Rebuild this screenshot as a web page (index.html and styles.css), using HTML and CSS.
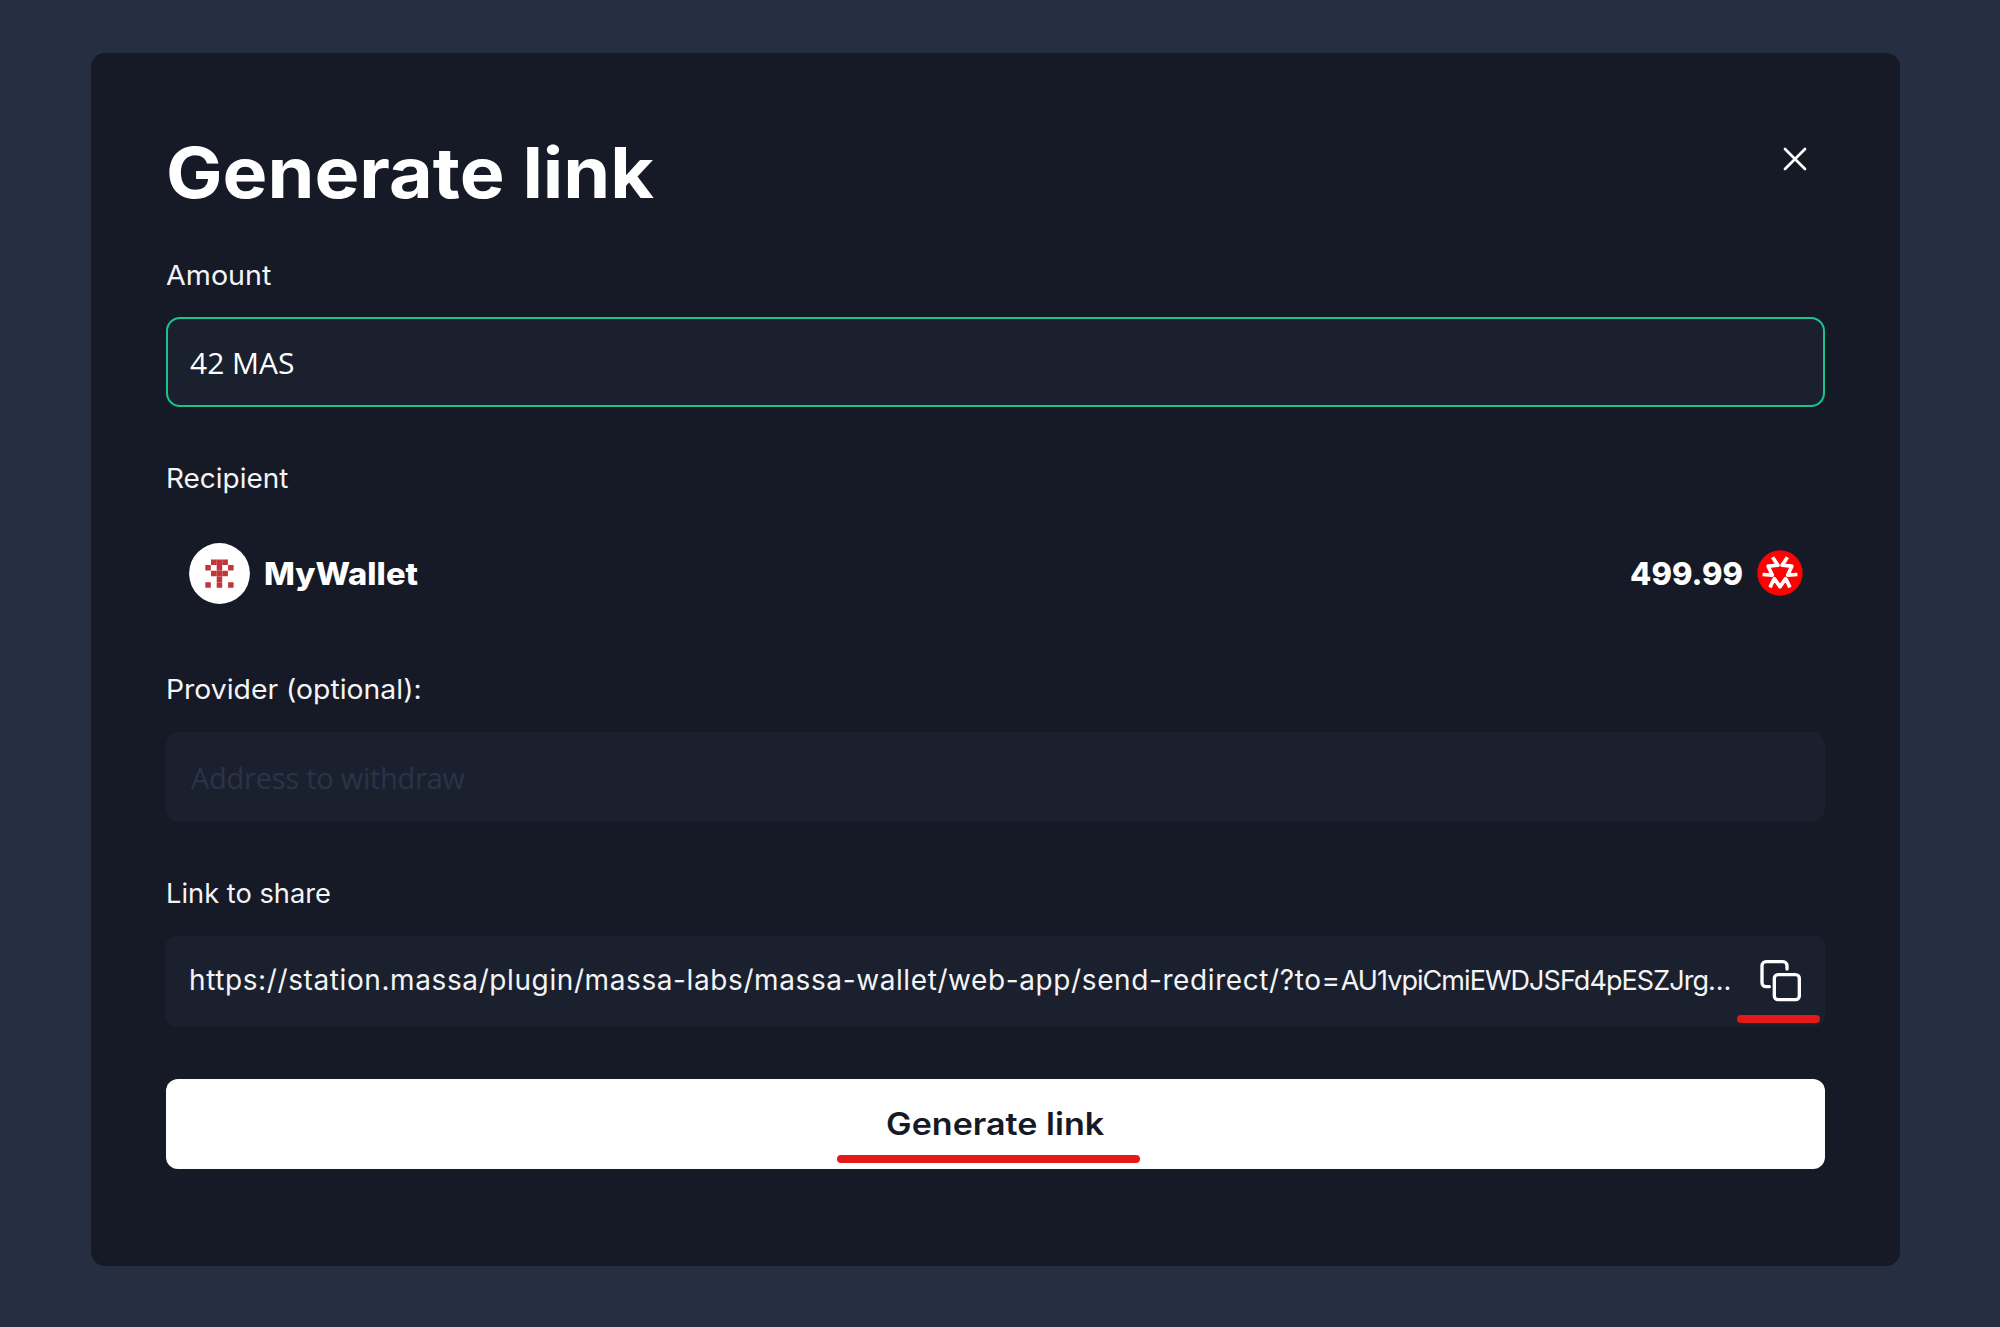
FILE: index.html
```
<!DOCTYPE html>
<html lang="en">
<head>
<meta charset="utf-8">
<title>Generate link</title>
<link rel="stylesheet" href="styles.css">
</head>
<body>
<main class="modal">
  <header class="modal-header">
    <h1 class="title">Generate link</h1>
    <svg class="close" viewBox="0 0 24 24" role="img" aria-label="Close"><path d="M2 2 22 22M22 2 2 22"/></svg>
  </header>
  <section class="field">
    <label class="label label-amount">Amount</label>
    <div class="input input-active"><span class="value">42 MAS</span></div>
  </section>
  <section class="field recipient">
    <label class="label label-recipient">Recipient</label>
    <div class="account">
      <svg class="avatar" viewBox="0 0 61 61"><circle cx="30.5" cy="30.5" r="30.4" fill="#fff"/><path fill="#c1363a" d="M22 16.4h5.5v5.5h-5.5zM27.7 16.4h5.5v5.5h-5.5zM33.4 16.4h5.5v5.5h-5.5zM16.3 22.1h5.5v5.5h-5.5zM27.7 22.1h5.5v5.5h-5.5zM39.1 22.1h5.5v5.5h-5.5zM22 27.8h5.5v5.5h-5.5zM27.7 27.8h5.5v5.5h-5.5zM33.4 27.8h5.5v5.5h-5.5zM27.7 33.5h5.5v5.5h-5.5zM16.3 39.2h5.5v5.5h-5.5zM27.7 39.2h5.5v5.5h-5.5zM39.1 39.2h5.5v5.5h-5.5z"/></svg>
      <span class="name">MyWallet</span>
      <span class="balance">499.99</span>
      <svg class="token" viewBox="-69 -69 138 138"><circle r="68" fill="#fd0303"/><g class="token-mark"><path d="M-30 43-17 17 0 41 17 17 30 43"/><path d="M-30 43-17 17 0 41 17 17 30 43" transform="rotate(120)"/><path d="M-30 43-17 17 0 41 17 17 30 43" transform="rotate(240)"/></g></svg>
    </div>
  </section>
  <section class="field provider">
    <label class="label label-provider">Provider (optional):</label>
    <div class="input"><span class="placeholder">Address to withdraw</span></div>
  </section>
  <section class="field">
    <label class="label label-link">Link to share</label>
    <div class="input share">
      <span class="url">https://station.massa/plugin/massa-labs/massa-wallet/web-app/send-redirect/?to=<span class="address">AU1vpiCmiEWDJSFd4pESZJrg…</span></span>
      <svg class="copy" viewBox="122 90 126 126"><path d="M150 170H140a12 12 0 0 1-12-12V107a12 12 0 0 1 12-12H191a12 12 0 0 1 12 12V117"/><rect x="165" y="134" width="75" height="75" rx="11"/></svg>
      <i class="mark mark-copy"></i>
    </div>
  </section>
  <button class="submit"><span class="submit-text">Generate link</span><i class="mark mark-submit"></i></button>
</main>
</body>
</html>
```
FILE: styles.css
```
* { box-sizing: border-box; }
body {
  margin: 0;
  height: 1327px;
  padding: 53px 100px 61px 91px;
  background: #262f42;
  font-family: Inter, "Noto Sans", sans-serif;
  color: #fff;
  overflow: hidden;
}
.modal {
  height: 1213px;
  padding: 73px 75px 0;
  border-radius: 14px;
  background: #161a26;
}
.modal-header { display: flex; justify-content: space-between; height: 130px; }
.title { margin: 0; font-size: 70px; font-weight: 650; line-height: 94px; letter-spacing: 0; white-space: nowrap; transform: scaleX(1.077); transform-origin: left; }
.close { width: 24px; height: 24px; margin: 21px 18px 0 0; fill: none; stroke: #fff; stroke-width: 2.7; stroke-linecap: round; }
.field { height: 204px; }
.label { display: block; height: 61px; font-size: 27px; line-height: 38px; white-space: nowrap; color: #f3f4f6; transform-origin: left; }
.label-amount { line-height: 39px; transform: scaleX(1.062); }
.label-recipient { transform: scaleX(1.035); }
.label-provider { transform: scaleX(1.05); }
.label-link { transform: scaleX(1.01); }
.input {
  position: relative;
  display: flex;
  align-items: center;
  height: 90px;
  padding: 0 24px;
  border-radius: 14px;
  background: #1b202e;
  font-family: "Open Sans", "Noto Sans", sans-serif;
  font-size: 30px;
  white-space: nowrap;
}
.input-active { border: 2px solid #1cc38b; padding: 0 22px; }
.placeholder { padding-left: 1px; font-size: 29px; letter-spacing: -.25px; color: #2a3349; }
.recipient { height: 211px; }
.account { display: flex; align-items: center; height: 110px; padding: 0 22px 0 23px; margin-top: -3px; }
.avatar { width: 61px; height: 61px; }
.name { margin-left: 14px; font-size: 31px; font-weight: 800; transform: scaleX(1.055); transform-origin: left; }
.balance { margin-left: auto; font-size: 31px; font-weight: 800; }
.token { width: 46px; height: 46px; margin-left: 14px; }
.token-mark { fill: none; stroke: #fff; stroke-width: 11; stroke-linejoin: round; }
.provider { height: 203.5px; }
.share { justify-content: space-between; padding: 0 23px; border-radius: 9px; font-family: Inter, sans-serif; font-size: 28px; color: #f3f4f6; }
.url { padding-bottom: 2px; letter-spacing: .6px; }
.address { font-size: 27px; letter-spacing: -.95px; }
.copy { width: 42px; height: 42px; fill: none; stroke: #fff; stroke-width: 10; stroke-linecap: round; }
.submit {
  position: relative;
  display: block;
  width: 100%;
  height: 90px;
  padding: 0;
  border: 0;
  border-radius: 12px;
  background: #fff;
  color: #161a26;
  font: 600 31px/90px Inter, sans-serif;
}
.submit-text { display: inline-block; transform: scaleX(1.1); }
.mark { position: absolute; height: 8px; border-radius: 4px; background: #e61919; }
.mark-copy { right: 5px; bottom: 3px; width: 83px; }
.mark-submit { left: 671px; bottom: 6px; width: 303px; }
```
